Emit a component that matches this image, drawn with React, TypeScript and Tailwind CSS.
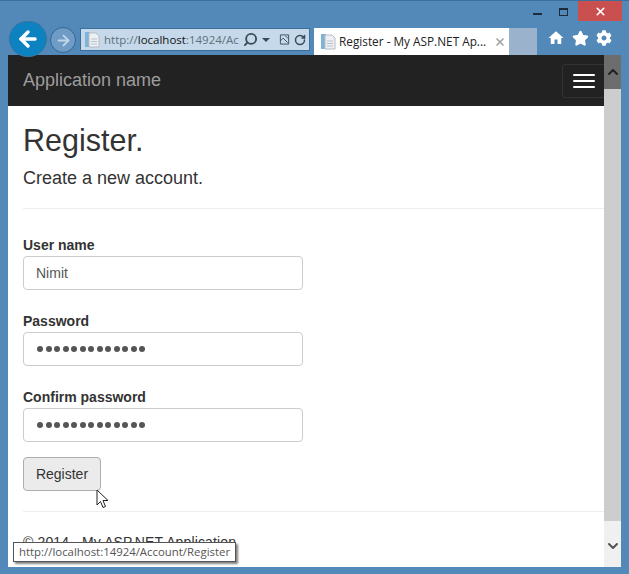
import { Star, ArrowLeft, ArrowRight, Search, RotateCw, ChevronUp, ChevronDown, X } from 'lucide-react';
import { FaCog } from 'react-icons/fa';
import { MdHome } from 'react-icons/md';

const PageIcon = () => (
  <svg width="17" height="17" viewBox="0 0 17 17">
    <rect x="1" y="1" width="5" height="15" fill="#7fb3d8" />
    <path d="M5 2h7l3 3v11H5z" fill="#eef1f4" stroke="#b4bcc4" />
    <path d="M7 8h6M7 10.500h6M7 13h6" stroke="#b9c1c8" />
  </svg>
);

const Field = ({ label, value, dots }: { label: string; value?: string; dots?: boolean }) => (
  <div>
    <label className="block h-[21px] text-[14px] leading-[20px] font-bold text-[#333]">{label}</label>
    <div className="flex h-[34px] w-[280px] items-center rounded-[4px] border border-[#ccc] bg-white px-[12px] text-[14px] text-[#555]">
      {dots ? (
        <div className="ml-[1px] flex gap-[2.500px]">
          {Array.from({ length: 13 }).map((_, i) => (
            <span key={i} className="h-[6px] w-[6px] rounded-full bg-[#555]" />
          ))}
        </div>
      ) : (
        value
      )}
    </div>
  </div>
);

const App = () => {
  return (
    <div className="relative flex h-[574px] w-[629px] flex-col overflow-hidden border-t border-[#3d6f9c] bg-[#5389b9] font-['Liberation_Sans',Arial,sans-serif]">
      {/* window buttons */}
      <div className="flex h-[21px] items-start justify-end pr-[7px]">
        <div className="mt-[12px] mr-[17px] h-[2px] w-[9px] bg-[#1d2c3a]" />
        <div className="mt-[7px] mr-[10px] h-[8px] w-[9px] border border-t-2 border-[#1d2c3a]" />
        <div className="flex h-[20px] w-[44px] items-center justify-center bg-[#c9504f]">
          <X size={13} strokeWidth={3} className="text-white" />
        </div>
      </div>

      {/* browser toolbar */}
      <div className="z-10 flex h-[33px] items-start pl-[9px]">
        <div className="-mt-[1px] flex h-[36px] w-[38px] shrink-0 items-center justify-center rounded-full border border-[#3a729f] bg-[#0c82c0]">
          <ArrowLeft size={24} strokeWidth={3.5} className="text-white" />
        </div>
        <div className="mt-[5px] ml-[3px] flex h-[26px] w-[26px] shrink-0 items-center justify-center rounded-full border border-[#34678f] bg-[#6e9cc6]">
          <ArrowRight size={17} strokeWidth={2.5} className="text-[#c3d6e8]" />
        </div>
        <div className="mt-[6px] ml-[4px] flex h-[23px] w-[230px] shrink-0 items-center border border-[#3d6f9c] bg-[#c5d9ea] pl-[3px] text-[#5f6f7c]">
          <PageIcon />
          <span className="ml-[3px] w-[135px] overflow-hidden whitespace-nowrap font-['Open_Sans',sans-serif] text-[11.500px]">
            http://<span className="text-[#111]">localhost</span>:14924/Ac
          </span>
          <Search size={15} strokeWidth={3} className="ml-[4px] -scale-x-100 text-[#3b4a57]" />
          <div className="mt-[1px] ml-[4px] h-0 w-0 border-x-[4px] border-t-[4px] border-x-transparent border-t-[#3b4a57]" />
          <svg width="11" height="13" viewBox="0 0 12 13" className="ml-[9px]" fill="none" stroke="#3b4a57">
            <path d="M1.500 1.500h9v10h-9zM1.500 8l3-3 5 5M7 2.500l3 3" />
          </svg>
          <RotateCw size={12} strokeWidth={3} className="ml-[4px] text-[#3b4a57]" />
        </div>
        <div className="mt-[6px] ml-[4px] flex h-[27px] w-[195px] shrink-0 items-center bg-white pl-[6px] whitespace-nowrap text-[#222]">
          <PageIcon />
          <span className="ml-[2px] font-['Open_Sans',sans-serif] text-[11.800px]">Register - My ASP.NET Ap...</span>
          <X size={12} strokeWidth={3.5} className="ml-[8px] text-[#a5a5a5]" />
        </div>
        <div className="mt-[6px] h-[27px] w-[28px] shrink-0 bg-[#9ab2cb]" />
        <div className="mt-[7px] ml-[10px] flex items-center gap-[7px] text-white">
          <MdHome size={18} />
          <Star size={17} fill="white" />
          <FaCog size={16} />
        </div>
      </div>

      <div className="mx-[8px] mb-[7px] flex min-h-0 flex-1">
        <div className="flex min-w-0 flex-1 flex-col overflow-hidden bg-white">
          <nav className="flex h-[51px] shrink-0 items-center justify-between bg-[#222] pl-[15px]">
            <span className="text-[18px] text-[#9d9d9d]">Application name</span>
            <div className="flex h-[34px] w-[42px] flex-col items-center justify-center gap-[4px] rounded-l-[4px] border border-r-0 border-[#333] pl-[1px]">
              <span className="h-[2px] w-[22px] rounded-[1px] bg-white" />
              <span className="h-[2px] w-[22px] rounded-[1px] bg-white" />
              <span className="h-[2px] w-[22px] rounded-[1px] bg-white" />
            </div>
          </nav>
          <main className="px-[15px] text-[#333]">
            <h2 className="mt-[18px] text-[30.500px] leading-[33px] font-normal">Register.</h2>
            <h4 className="mt-[11px] text-[18px] leading-[20px] font-normal">Create a new account.</h4>
            <hr className="mt-[20px] mb-[26px] -mr-[15px] border-[#eee]" />
            <div className="flex flex-col gap-[21px]">
              <Field label="User name" value="Nimit" />
              <Field label="Password" dots />
              <Field label="Confirm password" dots />
            </div>
            <button className="mt-[15px] h-[34px] w-[78px] rounded-[4px] border border-[#adadad] bg-[#ebebeb] text-[14px] text-[#333]">
              Register
            </button>
            <hr className="mt-[20px] -mr-[15px] border-[#eee]" />
            <p className="mt-[20px] text-[14px] leading-[20px] tracking-[0.13px] whitespace-nowrap">© 2014 - My ASP.NET Application</p>
          </main>
        </div>
        <div className="flex w-[17px] shrink-0 flex-col bg-[#f0f0f0]">
          <div className="flex h-[34px] items-center justify-center bg-[#6d6d6d]">
            <ChevronUp size={16} strokeWidth={3} className="text-[#222]" />
          </div>
          <div className="h-[432px] bg-[#cdcdcd]" />
          <div className="flex flex-1 items-center justify-center pt-[3px]">
            <ChevronDown size={16} strokeWidth={3} className="text-[#555]" />
          </div>
        </div>
      </div>

      {/* status tooltip over the page */}
      <div className="absolute top-[541px] left-[13px] border border-[#555] bg-white px-[5px] font-['Open_Sans',sans-serif] text-[11.400px] leading-[18px] whitespace-nowrap text-[#555] shadow-[2px_2px_2px_rgba(0,0,0,0.5)]">
        http://localhost:14924/Account/Register
      </div>

      {/* mouse pointer */}
      <svg className="absolute top-[488px] left-[96px]" width="14" height="20" viewBox="0 0 14 20">
        <path d="M1 1v15l3.500-3.500 2.500 6 2.500-1-2.500-6h5z" fill="white" stroke="#222" />
      </svg>
    </div>
  );
};

export default App;
